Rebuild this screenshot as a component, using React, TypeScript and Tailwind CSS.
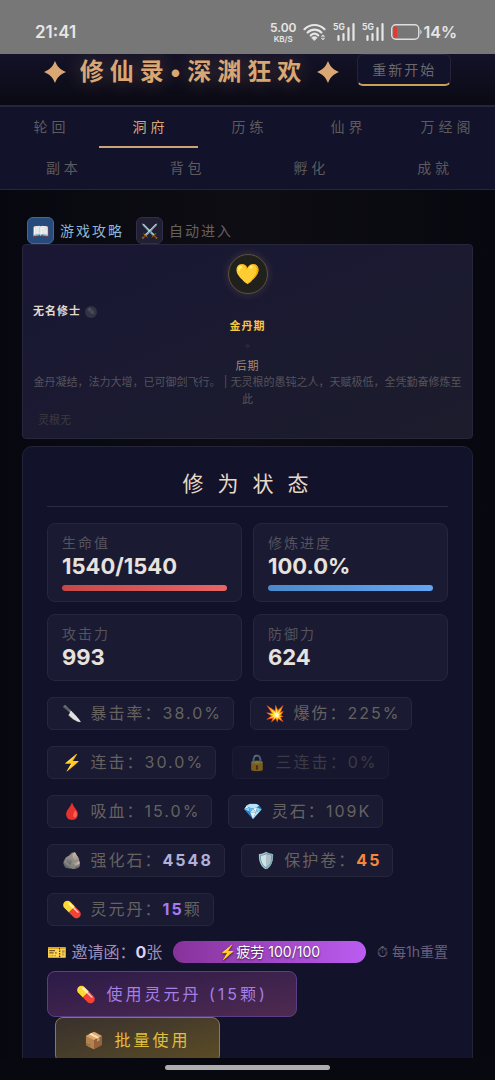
import { clsx } from "clsx";

const tabRows = [
  ["轮回", "洞府", "历练", "仙界", "万经阁"],
  ["副本", "背包", "孵化", "成就"],
];

const stats = [
  { label: "生命值", value: "1540/1540", percent: 100, bar: "bg-gradient-to-r from-[#c74747] to-[#ea6464]" },
  { label: "修炼进度", value: "100.0%", percent: 100, bar: "bg-gradient-to-r from-[#4a8acb] to-[#62a5f5]" },
  { label: "攻击力", value: "993" },
  { label: "防御力", value: "624" },
];

const chips = [
  { icon: "🔪", label: "暴击率", value: "38.0%" },
  { icon: "💥", label: "爆伤", value: "225%" },
  { icon: "⚡", label: "连击", value: "30.0%" },
  { icon: "🔒", label: "三连击", value: "0%", locked: true },
  { icon: "🩸", label: "吸血", value: "15.0%" },
  { icon: "💎", label: "灵石", value: "109K" },
  { icon: "🪨", label: "强化石", value: "4548", color: "font-bold text-[#b0b0d8]" },
  { icon: "🛡️", label: "保护卷", value: "45", color: "font-bold text-[#f5873c]" },
  { icon: "💊", label: "灵元丹", value: "15", unit: "颗", color: "font-bold text-[#a878f5]" },
];

const Signal = () => (
  <svg className="w-[23px] h-5" viewBox="0 0 23 20" fill="none" stroke="#e6e6e6">
    <path d="M5.5 18v-4M10.5 18v-6M15.5 18V6M20.5 18V2" strokeWidth="2.2" strokeLinecap="round" />
    <text x="0" y="8" fontSize="8.5" fontWeight="700" fill="#e6e6e6" stroke="none">5G</text>
  </svg>
);

const StatusBar = () => (
  <div className="flex items-end justify-between h-[54px] shrink-0 pl-[35px] pr-[38px] pb-3 bg-[#777777] text-[#e6e6e6]">
    <span className="text-[17px] leading-5 font-semibold">21:41</span>
    <div className="flex items-center gap-[6px]">
      <div className="flex flex-col items-center h-5 justify-center font-semibold">
        <span className="text-[12px] leading-[13px]">5.00</span>
        <span className="text-[8px] leading-[10px]">KB/S</span>
      </div>
      <svg className="w-6 h-5" viewBox="0 0 24 20" fill="none" stroke="#e6e6e6" strokeWidth="2.2" strokeLinecap="round">
        <path d="M1.5 7.2C7 1.6 16 1.6 21.5 7.2" />
        <path d="M4.6 10.5c3.9-3.9 9.9-3.9 13.8 0" />
        <path d="M7.8 13.4c2.2-2 5.2-2 7.4 0" />
        <path d="M9 15.6c1.5-1.3 3.5-1.3 5 0L11.5 18.2Z" fill="#e6e6e6" strokeWidth="1" />
        <path d="M18.5 14.3l1.5-1.5 1.5 1.5zM18.5 16.5l1.5 1.5 1.5-1.5z" fill="#e6e6e6" strokeWidth="0.5" />
      </svg>
      <Signal />
      <Signal />
      <div className="flex items-center gap-[2px]">
        <svg className="w-[31px] h-4" viewBox="0 0 31 16" fill="none">
          <rect x="0.75" y="0.75" width="27" height="14.5" rx="4" stroke="#dedede" strokeWidth="1.4" />
          <path d="M29.3 5.5c1.7.8 1.7 4.2 0 5z" fill="#dedede" />
          <path d="M4.5 2.5H6v11H4.5c-1.4 0-2.3-.9-2.3-2.3V4.8c0-1.4.9-2.3 2.3-2.3z" fill="#e23b32" />
        </svg>
        <span className="text-[16px] leading-5 font-semibold">14%</span>
      </div>
    </div>
  </div>
);

const Star = () => (
  <svg className="w-[22px] h-[22px]" viewBox="0 0 22 22" fill="#d9a674">
    <path d="M11 0C13.5 6 16 8.500 22 11C16 13.500 13.500 16 11 22C8.500 16 6 13.500 0 11C6 8.500 8.500 6 11 0Z" />
  </svg>
);

const Header = () => (
  <header className="flex items-start justify-center pb-[15px] border-b-2 border-[#25253c] bg-gradient-to-b from-[#141228] to-[#0a0a14]">
    <div className="flex items-center h-9">
      <Star />
      <h1 className="ml-[14px] mr-[10px] text-2xl font-bold tracking-[6px] text-[#d9a674] [text-shadow:0_0_20px_rgba(212,165,116,0.3)]">
        修仙录•深渊狂欢
      </h1>
      <Star />
    </div>
    <button className="ml-[18px] h-8 px-[14px] text-sm leading-7 tracking-[2px] text-[#6a6868] border border-[#23233a] border-b-2 border-b-[#c9a05c] rounded-md bg-[#12122a]">
      重新开始
    </button>
  </header>
);

const Nav = () => (
  <nav className="bg-[#12122a] border-b border-[#25253c]">
    {tabRows.map((row, index) => (
      <div key={index} className="flex">
        {row.map((tab) => (
          <button
            key={tab}
            className={clsx(
              "flex-1 h-[41px] pl-1 text-sm tracking-[4px] border-b-2",
              tab === "洞府" ? "text-[#d9a674] border-[#c9a474]" : "text-[#5d5b5d] border-transparent"
            )}
          >
            {tab}
          </button>
        ))}
      </div>
    ))}
  </nav>
);

const ProfileCard = () => (
  <section className="flex flex-col px-[10px] py-[9px] border border-[#27273c] rounded bg-gradient-to-br from-[#191735] to-[#1c1c2c]">
    <div className="self-center flex items-center justify-center size-10 rounded-full border border-[#5c5040] bg-[#20211d] text-xl shadow-[0_0_8px_rgba(212,165,116,0.2)]">
      💛
    </div>
    <div className="flex items-center gap-1 mt-[9px] h-[17px]">
      <h2 className="text-[11px] font-bold tracking-[1px] text-[#e4d8cc]">无名修士</h2>
      <button aria-label="改名" className="flex items-center justify-center size-3 rounded-full bg-[#333342] text-[#5c5c68] text-[10px]">
        ✎
      </button>
    </div>
    <div className="flex flex-col items-center text-[11px] tracking-[1px]">
      <span className="leading-3 font-bold text-[#f5c842]">金丹期</span>
      <span className="leading-7 text-[#26263c]">✦</span>
      <span className="leading-3 text-[#a88a70]">后期</span>
    </div>
    <p className="text-[11px] leading-[17px] text-center text-[#55535c] mt-[2px]">
      金丹凝结，法力大增，已可御剑飞行。 | 无灵根的愚钝之人，天赋极低，全凭勤奋修炼至此
    </p>
    <p className="mt-1 px-[5px] text-[11px] leading-[17px] text-[#3b3a42]">灵根无</p>
  </section>
);

const App = () => {
  return (
    <div className="flex flex-col h-screen overflow-hidden bg-[#08080f] font-['Inter','Noto_Sans_CJK_SC',sans-serif]">
      <StatusBar />

      <div className="flex-1 min-h-0 overflow-hidden">
        <Header />
        <Nav />

        <main className="px-[22px] pt-[27px] bg-gradient-to-r from-[#07080f] via-[#0f0d14] to-[#07080f]">
          <div className="flex items-center gap-3 px-[5px] text-sm tracking-[2px]">
            <a href="#guide" className="flex items-center gap-[6px] text-[#8fb5d0]">
              <span className="flex items-center justify-center size-[27px] pl-[2px] rounded-md border border-[#3f6aa0] bg-[#274a7c]">📖</span>
              游戏攻略
            </a>
            <button className="flex items-center gap-[6px] text-[#66625f]">
              <span className="flex items-center justify-center size-[27px] pl-[2px] rounded-md border border-[#30304a] bg-[#211f33]">⚔️</span>
              自动进入
            </button>
          </div>

          <ProfileCard />

          <section className="mt-[7px] px-6 pt-[19px] pb-10 border border-[#23233a] rounded-[10px] bg-[#12122a]">
            <h2 className="pb-1 pl-[10px] text-center text-[21px] leading-9 tracking-[14px] text-[#e8d8c4] border-b border-[#2b2b42]">
              修为状态
            </h2>

            <div className="grid grid-cols-2 gap-x-[11px] gap-y-3 mt-4">
              {stats.map((stat) => (
                <div key={stat.label} className="px-[14px] pt-[9px] pb-[10px] border border-[#27273c] rounded-lg bg-[#1a1a33]">
                  <div className="text-sm leading-5 tracking-[2px] text-[#55535c]">{stat.label}</div>
                  <div className="text-[22px] leading-[26px] font-bold text-[#e8e2de]">{stat.value}</div>
                  {stat.percent ? (
                    <div className="mt-[6px] h-[6px] rounded-full bg-[#0c0c1c]">
                      <div className={clsx("h-full rounded-full", stat.bar)} style={{ width: `${stat.percent}%` }} />
                    </div>
                  ) : null}
                </div>
              ))}
            </div>

            <div className="flex flex-wrap gap-4 mt-4 tracking-[2px] text-base text-[#66625f]">
              {chips.map((chip) => (
                <div
                  key={chip.label}
                  className={clsx(
                    "h-[33px] pl-[14px] pr-[11px] leading-[31px] whitespace-nowrap border border-[#27273c] rounded-md bg-[#1a1a33]",
                    chip.locked && "opacity-50"
                  )}
                >
                  {chip.icon} {chip.label}：<span className={chip.color}>{chip.value}</span>
                  {chip.unit}
                </div>
              ))}
            </div>

            <div className="flex items-center gap-[11px] mt-[14px] whitespace-nowrap text-[#9f8fb8]">
              <span className="text-base leading-6">
                🎫 邀请函：<b className="text-[#ddd0f0]">0</b>张
              </span>
              <div className="flex-1 h-[22px] text-center text-sm leading-[22px] text-white rounded-full bg-gradient-to-r from-[#87329a] to-[#bb5cf2] [text-shadow:0_1px_2px_rgba(0,0,0,0.7)]">
                ⚡疲劳 100/100
              </div>
              <span className="text-sm text-[#6a5f7c]">⏱ 每1h重置</span>
            </div>

            <div className="flex flex-col items-start mt-[7px] text-base leading-[44px] tracking-[3px]">
              <button className="px-7 border border-[#5b3f86] rounded-lg bg-gradient-to-br from-[#2c1a48] to-[#4f2a50] text-[#a47fe8]">
                💊 使用灵元丹 (15颗)
              </button>
              <button className="ml-2 px-7 border border-[#8f7a45] rounded-lg bg-gradient-to-br from-[#38302c] to-[#5c4d24] text-[#e0bf3c]">
                📦 批量使用
              </button>
            </div>
          </section>
        </main>
      </div>

      <div className="flex justify-center h-[22px] shrink-0 pt-[7px] bg-[#080810]">
        <div className="w-1/3 h-[5px] rounded-full bg-[#adadb0]" />
      </div>
    </div>
  );
};

export default App;
